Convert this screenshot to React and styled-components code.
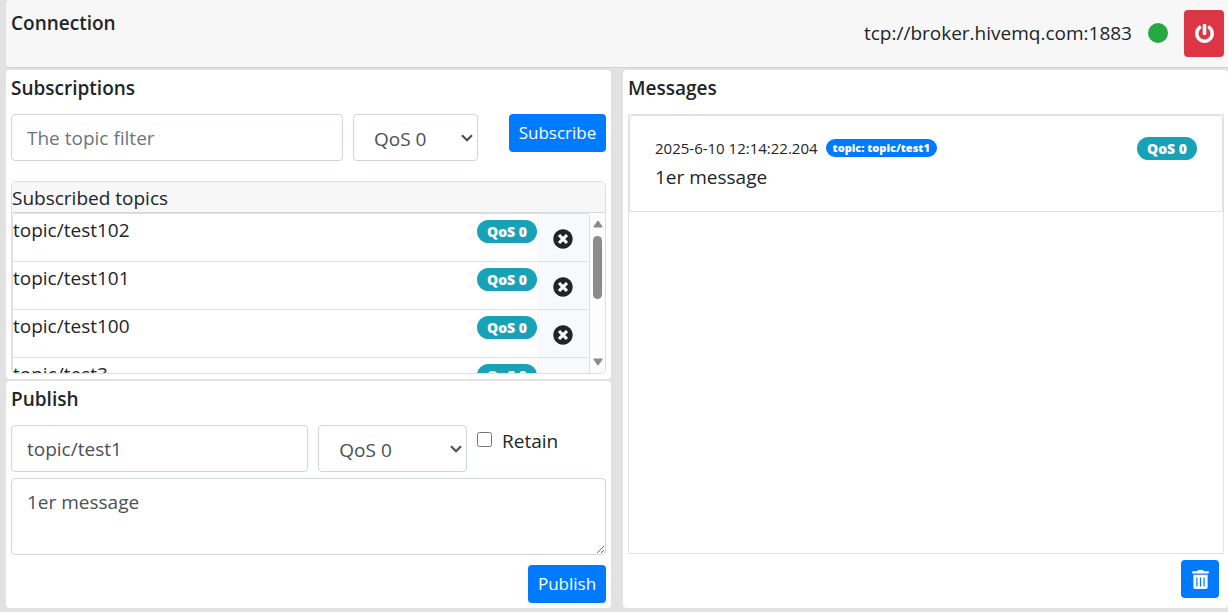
import React from "react";
import styled, { createGlobalStyle } from "styled-components";
import { FaPowerOff, FaTimesCircle, FaTrashAlt } from "react-icons/fa";

const GlobalStyle = createGlobalStyle`
  *, *::before, *::after { box-sizing: border-box; }
  body {
    margin: 0;
    background: #e2e2e2;
    color: #212529;
    font-family: "Segoe UI", "Open Sans", "Noto Sans", sans-serif;
    font-size: 19px;
    line-height: 28px;
  }
  button, input, select, textarea { font: inherit; }
`;

const Page = styled.main`
  display: flex;
  flex-direction: column;
  gap: 2px;
  padding: 0 0 4px 6px;
`;

const Header = styled.header`
  display: flex;
  justify-content: space-between;
  height: 68px;
  padding: 9px 4px 10px 5px;
  background: #f7f7f7;
  border-bottom: 1px solid #d3d3d3;
  border-radius: 4px 0 0 4px;
`;

const Title = styled.h2`
  margin: 0;
  font-size: 19px;
  line-height: 28px;
  font-weight: 600;
`;

const Status = styled.div`
  display: flex;
  align-items: center;
  gap: 16px;
`;

const Dot = styled.span`
  width: 20px;
  height: 20px;
  border-radius: 50%;
  background: #28a745;
`;

const Button = styled.button`
  display: flex;
  align-items: center;
  justify-content: center;
  flex: none;
  width: ${(p) => p.$width}px;
  height: ${(p) => p.$height || 38}px;
  padding: 0;
  border: 0;
  border-radius: 4px;
  color: #fff;
  background: ${(p) => (p.$danger ? "#dc3545" : "#007bff")};
  font-size: 17px;
  cursor: pointer;
`;

const Columns = styled.div`
  display: grid;
  grid-template-columns: minmax(0, 1fr) minmax(0, 1fr);
  gap: 12px;
`;

const Stack = styled.div`
  display: flex;
  flex-direction: column;
  gap: 2px;
`;

const Card = styled.section`
  display: flex;
  flex-direction: column;
  padding: 4px 5px 5px;
  background: #fff;
  border-radius: 4px;
`;

const SubscribeForm = styled.form`
  display: flex;
  align-items: flex-start;
  gap: 10px;
  margin: 12px 0 20px;
`;

const PublishForm = styled.form`
  display: grid;
  grid-template-columns: 2fr 1fr 129px;
  column-gap: 10px;
  row-gap: 6px;
  margin-top: 12px;
`;

const Input = styled.input`
  flex: 1;
  min-width: 0;
  width: 100%;
  height: 47px;
  padding: 0 15px;
  border: 1px solid #ced4da;
  border-radius: 4px;
  background: #fff;
  color: #495057;
  &::placeholder { color: #6c757d; opacity: 1; }
`;

const SelectWrap = styled.div`
  position: relative;
  width: ${(p) => p.$width || "100%"};
  height: 47px;
`;

const Select = styled.select`
  appearance: none;
  width: 100%;
  height: 47px;
  padding: 2px 20px 0 20px;
  border: 1px solid #ced4da;
  border-radius: 4px;
  background: #fff;
  color: #495057;
`;

const Chevron = styled.svg`
  position: absolute;
  right: 5px;
  top: 20px;
  pointer-events: none;
`;

const PushRight = styled.div`
  display: flex;
  justify-content: flex-end;
  grid-column: 1 / -1;
  padding: ${(p) => p.$pad || "0"};
`;

const CheckLabel = styled.label`
  display: flex;
  align-items: flex-start;
  gap: 10px;
  padding-top: 2px;
`;

const Checkbox = styled.input`
  width: 15px;
  height: 15px;
  margin: 5px 0 0;
`;

const TextArea = styled.textarea`
  display: block;
  grid-column: 1 / -1;
  width: 100%;
  height: 77px;
  padding: 9px 15px;
  border: 1px solid #ced4da;
  border-radius: 4px;
  color: #495057;
  resize: vertical;
`;

const TopicBox = styled.div`
  border: 1px solid #dfdfdf;
  border-radius: 5px;
  overflow: hidden;
`;

const TopicHeading = styled.h3`
  margin: 0;
  padding: 2px 0 0;
  background: #f7f7f7;
  border-bottom: 1px solid #d8d8d8;
  font-size: 19px;
  line-height: 28px;
  font-weight: 400;
`;

const TopicScroller = styled.div`
  display: flex;
  height: 160px;
`;

const TopicList = styled.ul`
  flex: 1;
  margin: 0;
  padding: 0;
  list-style: none;
  overflow-y: auto;
  scrollbar-width: none;
  border: 1px solid #dfdfdf;
  border-width: 1px 1px 0;
  border-radius: 4px 4px 0 0;
`;

const TopicRow = styled.li`
  display: flex;
  align-items: flex-start;
  height: 48px;
  border-bottom: 1px solid #dfdfdf;
`;

const TopicName = styled.span`
  flex: 1;
  padding-top: 2px;
`;

const Badge = styled.span`
  display: inline-flex;
  align-items: center;
  justify-content: center;
  width: 60px;
  height: 23px;
  margin-top: 6px;
  border-radius: 12px;
  background: #17a2b8;
  color: #fff;
  font-size: 14px;
  line-height: 22px;
  font-weight: 800;
`;

const TopicBadge = styled(Badge)`
  width: auto;
  height: 18px;
  margin: 0;
  padding: 0 7px;
  background: #007bff;
  font-size: 11px;
  line-height: 18px;
`;

const RemoveButton = styled.button`
  display: flex;
  align-items: center;
  justify-content: center;
  width: 52px;
  height: 47px;
  padding: 2px 0 0;
  border: 0;
  border-radius: 4px;
  background: #f8f9fa;
  color: #212529;
`;

const ScrollTrack = styled.div`
  display: flex;
  flex-direction: column;
  align-items: center;
  width: 15px;
  padding: 7px 0;
  background: #fcfcfc;
`;

const ScrollThumb = styled.div`
  width: 9px;
  height: 63px;
  margin: 8px 0 auto;
  border-radius: 5px;
  background: #8b8b8b;
`;

const MessageCard = styled(Card)`
  padding-right: 4px;
`;

const MessageList = styled.ul`
  flex: 1;
  margin: 12px 0 6px;
  padding: 0;
  list-style: none;
  border: 1px solid #dee2e6;
`;

const MessageItem = styled.li`
  display: flex;
  justify-content: space-between;
  align-items: flex-start;
  height: 97px;
  padding: 15px 25px 0;
  border: 1px solid #dfdfdf;
  border-radius: 4px 4px 0 0;
`;

const MessageMeta = styled.div`
  display: flex;
  align-items: center;
  gap: 8px;
  height: 32px;
  padding-top: 2px;
  font-size: 15px;
`;

const Arrow = ({ down }) => (
  <svg width="10" height="8" viewBox="0 0 9 8" preserveAspectRatio="none" aria-hidden="true">
    <path
      d={down ? "M1 .5h7q1 0 .5 1L5.3 6.7q-.8 1.1-1.6 0L.5 1.5Q0 .5 1 .5z" : "M1 7.5h7q1 0 .5-1L5.3 1.3q-.8-1.1-1.6 0L.5 6.5q-.5 1 .5 1z"}
      fill="#8b8b8b"
    />
  </svg>
);

const QosSelect = ({ width }) => (
  <SelectWrap $width={width}>
    <Select aria-label="QoS" defaultValue="0">
      <option value="0">QoS 0</option>
      <option value="1">QoS 1</option>
      <option value="2">QoS 2</option>
    </Select>
    <Chevron width="12" height="8" viewBox="0 0 12 8" aria-hidden="true">
      <path d="M1 1.2L6 6.2L11 1.2" fill="none" stroke="#495057" strokeWidth="2.2" />
    </Chevron>
  </SelectWrap>
);

const topics = ["topic/test102", "topic/test101", "topic/test100", "topic/test3"];
const stay = (event) => event.preventDefault();

export default function App() {
  return (
    <>
      <GlobalStyle />
      <Page>
        <Header>
          <Title>Connection</Title>
          <Status>
            <span>tcp://broker.hivemq.com:1883</span>
            <Dot />
            <Button $danger $width={40} $height={47} aria-label="Disconnect">
              <FaPowerOff size={19} stroke="#fff" strokeWidth={16} />
            </Button>
          </Status>
        </Header>
        <Columns>
          <Stack>
            <Card>
              <Title>Subscriptions</Title>
              <SubscribeForm onSubmit={stay}>
                <Input placeholder="The topic filter" aria-label="Topic filter" />
                <QosSelect width="125px" />
                <PushRight $pad="0 0 0 21px">
                  <Button $width={97}>Subscribe</Button>
                </PushRight>
              </SubscribeForm>
              <TopicBox>
                <TopicHeading>Subscribed topics</TopicHeading>
                <TopicScroller>
                  <TopicList>
                    {topics.map((topic) => (
                      <TopicRow key={topic}>
                        <TopicName>{topic}</TopicName>
                        <Badge>QoS 0</Badge>
                        <RemoveButton aria-label={`Unsubscribe ${topic}`}>
                          <FaTimesCircle size={20} />
                        </RemoveButton>
                      </TopicRow>
                    ))}
                  </TopicList>
                  <ScrollTrack aria-hidden="true">
                    <Arrow />
                    <ScrollThumb />
                    <Arrow down />
                  </ScrollTrack>
                </TopicScroller>
              </TopicBox>
            </Card>
            <Card>
              <Title>Publish</Title>
              <PublishForm onSubmit={stay}>
                <Input defaultValue="topic/test1" aria-label="Topic" />
                <QosSelect />
                <CheckLabel>
                  <Checkbox type="checkbox" />
                  Retain
                </CheckLabel>
                <TextArea defaultValue="1er message" aria-label="Message" />
                <PushRight $pad="4px 0 0">
                  <Button $width={78}>Publish</Button>
                </PushRight>
              </PublishForm>
            </Card>
          </Stack>
          <MessageCard>
            <Title>Messages</Title>
            <MessageList>
              <MessageItem>
                <div>
                  <MessageMeta>
                    <time>2025-6-10 12:14:22.204</time>
                    <TopicBadge>topic: topic/test1</TopicBadge>
                  </MessageMeta>
                  <div>1er message</div>
                </div>
                <Badge>QoS 0</Badge>
              </MessageItem>
            </MessageList>
            <PushRight $pad="0 5px 5px 0">
              <Button $width={38} aria-label="Clear messages">
                <FaTrashAlt size={19} />
              </Button>
            </PushRight>
          </MessageCard>
        </Columns>
      </Page>
    </>
  );
}
